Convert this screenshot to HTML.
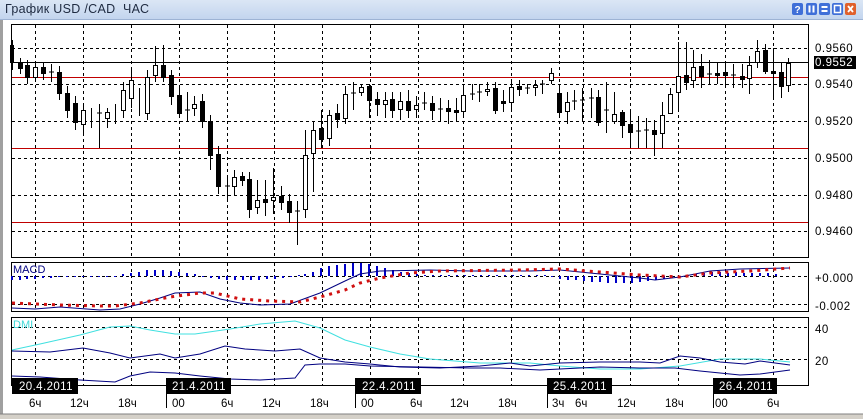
<!DOCTYPE html>
<html><head><meta charset="utf-8"><style>
html,body{margin:0;padding:0;width:863px;height:419px;overflow:hidden;background:#fff;font-family:"Liberation Sans",sans-serif}
#t{position:absolute;left:0;top:0;width:863px;height:19px;background:linear-gradient(#dbe6f5,#c3d5ee);border-bottom:1px solid #9db3d4}
#t span{position:absolute;left:5px;top:2px;font-size:12.5px;color:#1e2a40;letter-spacing:.3px}
svg{position:absolute;left:0;top:0}
</style></head><body>
<div id="t"><span>График USD /CAD&nbsp; ЧАС</span></div>
<svg width="863" height="419" viewBox="0 0 863 419" font-family="Liberation Sans, sans-serif">
<rect x="0" y="20" width="3" height="399" fill="#a0a0a0"/>
<rect x="0" y="414" width="863" height="5" fill="#d4d0c8"/>
<line x1="0" y1="414" x2="863" y2="414" stroke="#808080"/>
<g>
<rect x="792" y="3" width="11" height="12" rx="2" fill="#3f6fd8"/><text x="794.5" y="13" font-size="10" font-weight="bold" fill="#fff">?</text>
<rect x="806" y="3" width="11" height="12" rx="2" fill="#3f6fd8"/><rect x="808.5" y="5.5" width="2" height="7" fill="#fff"/><rect x="812.5" y="5.5" width="2" height="7" fill="#fff"/>
<rect x="819" y="3" width="11" height="12" rx="2" fill="#3f6fd8"/><rect x="821.5" y="6" width="6" height="2" fill="#fff"/><rect x="821.5" y="10" width="6" height="2" fill="#fff"/>
<rect x="832" y="3" width="11" height="12" rx="2" fill="#3f6fd8"/><rect x="834.5" y="5.5" width="6" height="7" fill="none" stroke="#fff" stroke-width="1.5"/>
<rect x="845" y="3" width="11" height="12" rx="2" fill="#e0602c"/><path d="M848 6l5 6M853 6l-5 6" stroke="#fff" stroke-width="1.8"/>
</g>
<g fill="none" stroke="#000">
<rect x="11.5" y="24.5" width="797" height="233"/>
<rect x="11.5" y="262.5" width="797" height="49"/>
<rect x="11.5" y="317.5" width="797" height="68"/>
</g>
<g stroke="#000" stroke-dasharray="3,3" stroke-width="1">
<path d="M35.5 25V257M83.5 25V257M131.5 25V257M179.5 25V257M227.5 25V257M274.5 25V257M322.5 25V257M370.5 25V257M418.5 25V257M463.5 25V257M511.5 25V257M559.5 25V257M583.5 25V257M630.5 25V257M678.5 25V257M725.5 25V257M773.5 25V257"/>
<path d="M35.5 263V311M83.5 263V311M131.5 263V311M179.5 263V311M227.5 263V311M274.5 263V311M322.5 263V311M370.5 263V311M418.5 263V311M463.5 263V311M511.5 263V311M559.5 263V311M583.5 263V311M630.5 263V311M678.5 263V311M725.5 263V311M773.5 263V311"/>
<path d="M35.5 318V385M83.5 318V385M131.5 318V385M179.5 318V385M227.5 318V385M274.5 318V385M322.5 318V385M370.5 318V385M418.5 318V385M463.5 318V385M511.5 318V385M559.5 318V385M583.5 318V385M630.5 318V385M678.5 318V385M725.5 318V385M773.5 318V385"/>
<path d="M12 48.5H808M12 84.5H808M12 121.5H808M12 158.5H808M12 195.5H808M12 231.5H808M12 276.5H808M12 304.5H808M12 327.5H808M12 359.5H808"/>
</g>
<path d="M12 62.5H808" stroke="#000"/>
<g stroke="#c00000"><path d="M12 77.5H808M12 148.5H808M12 222.5H808"/></g>
<g stroke="#000" stroke-width="1">
<path d="M12.5 40V70M20.5 58V74M27.5 60V84M35.5 64V82M43.5 62V80M51.5 64V82M59.5 66V100M67.5 86V118M75.5 96V130M83.5 106V136M91.5 108V128M99.5 104V148M107.5 108V128M115.5 104V124M123.5 82V118M131.5 70V108M139.5 88V116M147.5 70V120M155.5 46V82M163.5 45V82M171.5 70V105M179.5 88V118M187.5 92V122M194.5 96V116M202.5 94V128M210.5 115V170M218.5 146V194M227.5 176V202M234.5 170V196M242.5 172V186M249.5 172V218M257.5 180V214M265.5 180V216M273.5 168V214M281.5 186V210M289.5 194V223M297.5 201V245M305.5 130V218M313.5 122V192M321.5 110V148M329.5 110V146M337.5 104V128M345.5 86V124M353.5 82V110M361.5 84V96M369.5 84V118M377.5 92V116M385.5 92V118M392.5 92V118M400.5 92V120M408.5 90V118M416.5 96V118M424.5 92V110M432.5 96V120M440.5 98V122M448.5 100V124M456.5 98V122M463.5 84V118M472.5 84V100M479.5 84V102M487.5 82V96M495.5 82V114M503.5 90V112M511.5 80V112M519.5 80V96M527.5 84V94M535.5 80V96M542.5 80V94M551.5 68V84M559.5 84V118M567.5 92V124M574.5 90V110M582.5 88V122M591.5 88V118M598.5 90V126M606.5 82V133M614.5 92V124M622.5 110V138M630.5 110V148M638.5 116V148M646.5 118V148M654.5 120V156M662.5 102V148M670.5 88V114M678.5 42V112M686.5 42V90M693.5 50V88M701.5 54V88M709.5 60V84M717.5 62V84M725.5 62V86M733.5 64V88M742.5 64V88M749.5 56V94M757.5 40V68M765.5 44V74M773.5 48V98M781.5 62V98M788.5 58V92"/>
</g>
<g stroke="#000" stroke-width="1">
<g fill="#000">
<rect x="10.5" y="45.5" width="3" height="17"/><rect x="18.5" y="62.5" width="4" height="6"/><rect x="25.5" y="65.5" width="4" height="12"/><rect x="41.5" y="67.5" width="4" height="6"/><rect x="57.5" y="72.5" width="4" height="21"/><rect x="65.5" y="93.5" width="4" height="17"/><rect x="73.5" y="103.5" width="4" height="19"/><rect x="161.5" y="65.5" width="4" height="12"/><rect x="169.5" y="75.5" width="4" height="21"/><rect x="177.5" y="95.5" width="4" height="18"/><rect x="200.5" y="101.5" width="4" height="20"/><rect x="208.5" y="121.5" width="4" height="34"/><rect x="216.5" y="154.5" width="4" height="32"/><rect x="240.5" y="176.5" width="4" height="4"/><rect x="247.5" y="179.5" width="4" height="30"/><rect x="263.5" y="199.5" width="4" height="3"/><rect x="279.5" y="196.5" width="4" height="6"/><rect x="287.5" y="201.5" width="4" height="11"/><rect x="319.5" y="128.5" width="4" height="11"/><rect x="335.5" y="113.5" width="4" height="6"/><rect x="367.5" y="86.5" width="4" height="14"/><rect x="375.5" y="99.5" width="4" height="5"/><rect x="390.5" y="99.5" width="4" height="11"/><rect x="406.5" y="101.5" width="4" height="9"/><rect x="430.5" y="103.5" width="4" height="7"/><rect x="446.5" y="108.5" width="4" height="3"/><rect x="454.5" y="110.5" width="4" height="2"/><rect x="493.5" y="88.5" width="4" height="22"/><rect x="501.5" y="101.5" width="4" height="2"/><rect x="517.5" y="86.5" width="4" height="3"/><rect x="557.5" y="93.5" width="4" height="19"/><rect x="596.5" y="97.5" width="4" height="25"/><rect x="620.5" y="112.5" width="4" height="13"/><rect x="628.5" y="124.5" width="4" height="8"/><rect x="652.5" y="130.5" width="4" height="4"/><rect x="684.5" y="75.5" width="4" height="7"/><rect x="699.5" y="66.5" width="4" height="10"/><rect x="715.5" y="73.5" width="4" height="2"/><rect x="723.5" y="72.5" width="4" height="3"/><rect x="740.5" y="76.5" width="4" height="3"/><rect x="763.5" y="50.5" width="4" height="21"/><rect x="771.5" y="71.5" width="4" height="2"/><rect x="779.5" y="72.5" width="4" height="14"/>
</g>
<g fill="#fff">
<rect x="33.5" y="67.5" width="4" height="10"/><rect x="81.5" y="110.5" width="4" height="14"/><rect x="105.5" y="112.5" width="4" height="6"/><rect x="121.5" y="90.5" width="4" height="20"/><rect x="129.5" y="80.5" width="4" height="18"/><rect x="145.5" y="77.5" width="4" height="36"/><rect x="153.5" y="65.5" width="4" height="10"/><rect x="192.5" y="104.5" width="4" height="4"/><rect x="232.5" y="177.5" width="4" height="9"/><rect x="255.5" y="200.5" width="4" height="7"/><rect x="271.5" y="197.5" width="4" height="3"/><rect x="303.5" y="155.5" width="4" height="54"/><rect x="311.5" y="130.5" width="4" height="23"/><rect x="327.5" y="115.5" width="4" height="23"/><rect x="343.5" y="94.5" width="4" height="24"/><rect x="359.5" y="87.5" width="4" height="5"/><rect x="383.5" y="100.5" width="4" height="4"/><rect x="398.5" y="101.5" width="4" height="8"/><rect x="414.5" y="105.5" width="4" height="4"/><rect x="461.5" y="95.5" width="4" height="16"/><rect x="485.5" y="89.5" width="4" height="2"/><rect x="509.5" y="87.5" width="4" height="15"/><rect x="533.5" y="85.5" width="4" height="2"/><rect x="549.5" y="73.5" width="4" height="7"/><rect x="565.5" y="102.5" width="4" height="9"/><rect x="612.5" y="114.5" width="4" height="7"/><rect x="660.5" y="115.5" width="4" height="18"/><rect x="668.5" y="94.5" width="4" height="19"/><rect x="676.5" y="76.5" width="4" height="16"/><rect x="691.5" y="67.5" width="4" height="13"/><rect x="747.5" y="65.5" width="4" height="13"/><rect x="755.5" y="51.5" width="4" height="11"/><rect x="786.5" y="63.5" width="4" height="22"/>
</g>
<path d="M49 72H54M97 113H102M185 110H190M225 186H230M295 211H300M351 93H356M422 103H427M438 109H443M470 94H475M477 92H482M525 88H530M540 84H545M572 101H577M580 100H585M589 98H594M604 110H609M636 131H641M644 130H649M707 74H712M731 75H736"/>
</g>
<g font-size="11.5" fill="#000" letter-spacing=".5">
<text x="815" y="52">0.9560</text><text x="815" y="88">0.9540</text><text x="815" y="125">0.9520</text><text x="815" y="162">0.9500</text><text x="815" y="199">0.9480</text><text x="815" y="235">0.9460</text>
<text x="815" y="282">+0.000</text><text x="815" y="310">-0.002</text><text x="815" y="333">40</text><text x="815" y="365">20</text>
</g>
<rect x="814" y="56" width="42" height="13" fill="#000"/><text x="815" y="66" font-size="11.5" fill="#fff" letter-spacing=".5">0.9552</text>
<g stroke="#0000c8" stroke-width="2">
<path d="M12 276V280M20 276V280M27 276V279M35 276V279M43 276V278M51 276V278M59 276V277M67 276V277M75 276V277M83 276V277M91 276V277M99 276V277M107 276V277M115 276V277M123 276V274M131 276V273M139 276V272M147 276V270M155 276V270M163 276V270M171 276V271M179 276V272M187 276V273M195 276V274M203 276V277M211 276V278M219 276V279M227 276V280M235 276V280M243 276V280M251 276V280M259 276V280M267 276V279M275 276V279M283 276V278M291 276V277M299 276V275M305 276V274M313 276V272M321 276V268M329 276V266M337 276V265M345 276V264M353 276V263M361 276V263M369 276V264M377 276V266M385 276V268M393 276V270M401 276V272M409 276V273M417 276V274M425 276V275M433 276V275M441 276V275M449 276V275M457 276V275M465 276V275M473 276V275M481 276V275M489 276V275M497 276V275M505 276V275M513 276V275M521 276V275M529 276V275M537 276V275M545 276V275M552 276V277M560 276V279M568 276V280M576 276V280M584 276V281M592 276V282M600 276V282M608 276V283M616 276V283M624 276V283M632 276V283M640 276V282M648 276V281M656 276V280M664 276V279M672 276V278M680 276V277M688 276V275M696 276V274M704 276V273M712 276V272M720 276V272M728 276V273M736 276V272M744 276V273M752 276V273M760 276V273M768 276V273M776 276V274"/>
</g>
<polyline fill="none" stroke="#000080" stroke-width="1" points="12,308 35,309 60,307 100,310 120,309 140,304 160,298 175,293 200,292 220,299 240,303 260,305 290,304 320,293 345,281 360,274 380,271 430,270 470,271 530,271 560,270 600,274 640,278 655,280 680,277 710,271 740,269 790,268"/>
<polyline fill="none" stroke="#d01010" stroke-width="3" stroke-dasharray="3,5" points="12,303 60,305 100,306 115,306 140,303 170,297 200,293 215,293 240,299 270,301 300,302 320,297 345,290 360,283 380,278 410,273 440,271 520,270 560,269 600,272 640,275 680,277 710,273 750,271 790,268"/>
<text x="13" y="273" font-size="11" fill="#000080">MACD</text>
<polyline fill="none" stroke="#40e0e0" stroke-width="1" points="12,350 40,344 80,335 110,327 130,326 150,330 175,334 195,334 230,329 260,324 295,321 320,328 345,340 370,347 400,354 430,359 480,363 530,363 560,366 600,369 640,369 680,366 720,359 760,359 790,362"/>
<polyline fill="none" stroke="#000080" stroke-width="1" points="12,351 50,352 83,348 110,353 130,358 160,354 175,358 200,354 225,346 245,349 275,351 300,349 320,358 345,362 370,364 400,367 440,368 480,366 510,363 530,366 560,363 600,362 640,362 660,363 680,356 700,358 720,362 745,364 760,361 790,365"/>
<polyline fill="none" stroke="#000080" stroke-width="1" points="12,376 40,377 80,380 115,382 130,376 150,372 175,373 200,376 230,379 260,380 295,378 305,365 320,364 345,364 370,366 420,367 470,368 500,368 540,370 600,367 640,368 675,368 700,371 740,375 760,374 790,370"/>
<text x="13" y="328" font-size="11" fill="#40d8d8">DMI</text>
<g stroke="#000"><path d="M166.5 378V408M355.5 378V408M547.5 378V408M713.5 378V408"/></g>
<g fill="#000"><rect x="12" y="378" width="66" height="16"/><rect x="166" y="378" width="65" height="16"/><rect x="355" y="378" width="66" height="16"/><rect x="547" y="378" width="65" height="16"/><rect x="713" y="378" width="64" height="16"/></g>
<g font-size="11.5" fill="#fff" letter-spacing=".4">
<text x="19" y="390">20.4.2011</text><text x="172" y="390">21.4.2011</text><text x="362" y="390">22.4.2011</text><text x="553" y="390">25.4.2011</text><text x="719" y="390">26.4.2011</text>
</g>
<g font-size="11.5" fill="#000">
<text x="29" y="407">6ч</text><text x="70" y="407">12ч</text><text x="118" y="407">18ч</text><text x="172" y="407">00</text><text x="221" y="407">6ч</text><text x="262" y="407">12ч</text><text x="310" y="407">18ч</text><text x="361" y="407">00</text><text x="410" y="407">6ч</text><text x="450" y="407">12ч</text><text x="498" y="407">18ч</text><text x="552" y="407">3ч</text><text x="575" y="407">6ч</text><text x="617" y="407">12ч</text><text x="665" y="407">18ч</text><text x="715" y="407">00</text><text x="767" y="407">6ч</text>
</g>
</svg>
</body></html>
